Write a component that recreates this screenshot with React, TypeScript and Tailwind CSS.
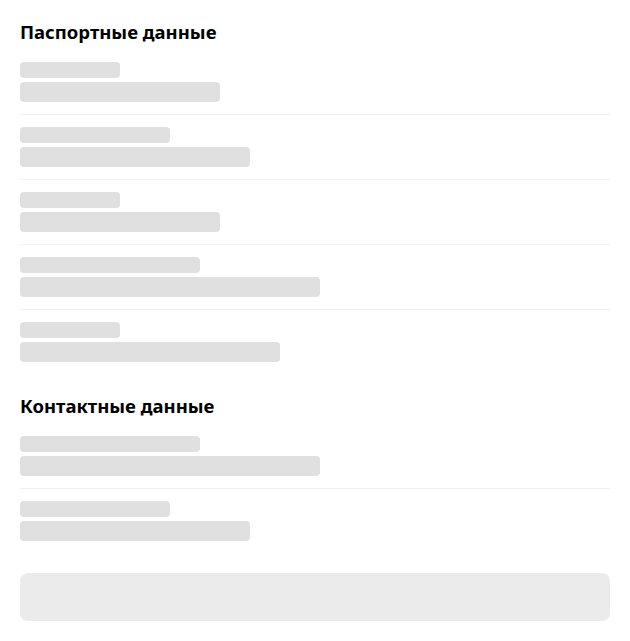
import React from 'react';

type Row = { label: number; value: number };

const PASSPORT: Row[] = [
    { label: 100, value: 200 },
    { label: 150, value: 230 },
    { label: 100, value: 200 },
    { label: 180, value: 300 },
    { label: 100, value: 260 },
];

const CONTACTS: Row[] = [
    { label: 180, value: 300 },
    { label: 150, value: 230 },
];

const Section: React.FC<{ title: string; rows: Row[]; className?: string }> = ({ title, rows, className }) => (
    <section className={className}>
        <h2 className="text-[18.5px] leading-6 font-bold text-black mb-[6px]">{title}</h2>
        <div>
            {rows.map((row, i) => (
                <div
                    key={i}
                    className={`py-3 flex flex-col gap-1 ${i < rows.length - 1 ? 'border-b border-[#f0f0f0]' : ''}`}
                >
                    <div className="h-4 rounded bg-[#e0e0e0]" style={{ width: row.label }} />
                    <div className="h-5 rounded bg-[#e0e0e0]" style={{ width: row.value }} />
                </div>
            ))}
        </div>
    </section>
);

export default function App() {
    return (
        <div className="bg-white p-5 w-[630px] min-h-[641px]" style={{ fontFamily: '"Noto Sans", "Open Sans", sans-serif' }}>
            <Section title="Паспортные данные" rows={PASSPORT} />
            <Section title="Контактные данные" rows={CONTACTS} className="mt-5" />
            <div className="mt-5 h-12 rounded-lg bg-[#ebebeb]" />
        </div>
    );
}
